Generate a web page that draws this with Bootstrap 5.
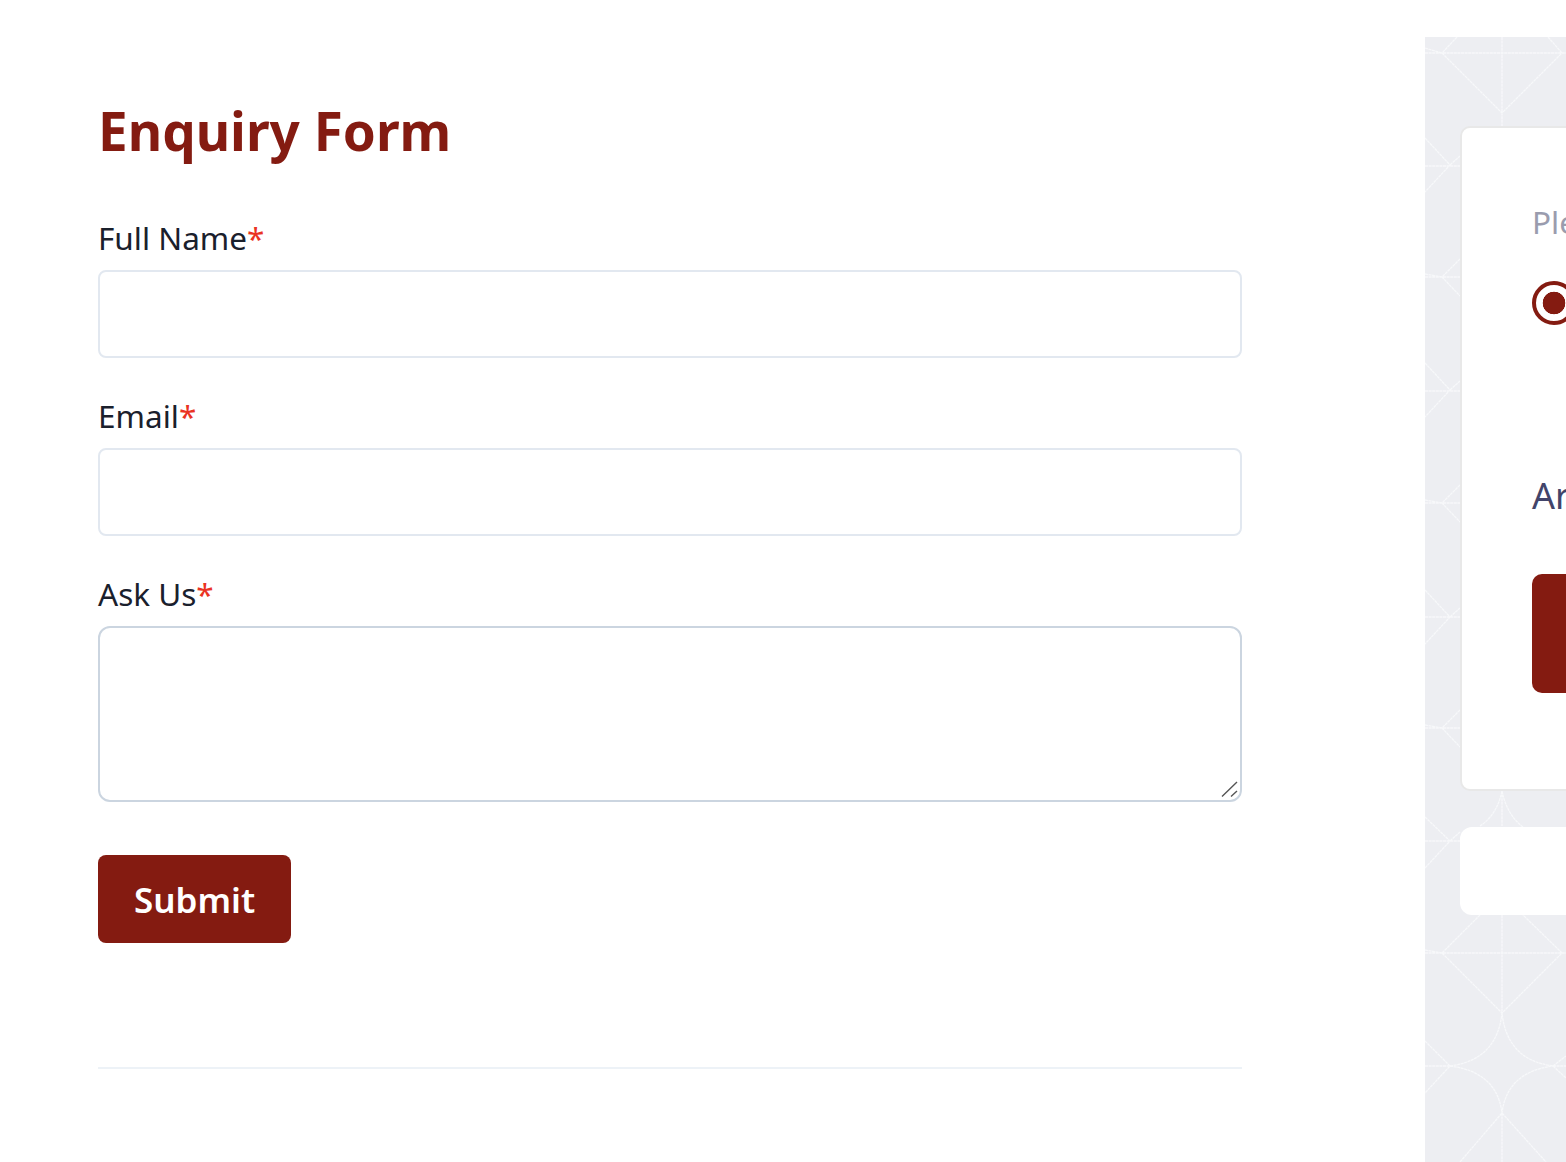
<!DOCTYPE html>
<html lang="en">
<head>
<meta charset="utf-8">
<title>Enquiry Form</title>
<link href="https://cdn.jsdelivr.net/npm/bootstrap@5.3.0/dist/css/bootstrap.min.css" rel="stylesheet">
<style>
html,body{height:1162px;overflow:hidden;background:#fff;font-family:"Noto Sans","Open Sans",sans-serif}
.shell{height:1162px;overflow:hidden}
.form-col{width:1242px;flex:none;padding-left:98px;padding-top:97px}
.form-title{font-size:53px;line-height:68px;font-weight:700;color:#841b11;margin:0 0 53px}
.form-field{margin-bottom:38px}
.field-label{font-size:31.5px;line-height:40px;color:#1a202c;margin-bottom:12px;display:block}
.field-label span{color:#ea3323}
.field-input{height:88px;border:2px solid #e2e8f0;border-radius:8px;box-shadow:none}
.area-wrap{position:relative}
.field-area{height:176px;border:2px solid #cbd5e0;border-radius:12px;box-shadow:none;resize:none}
.area-grip{position:absolute;right:3px;bottom:4px;width:18px;height:18px;stroke:#555;stroke-width:1.4;fill:none;pointer-events:none}
.send-btn{height:88px;width:193px;background:#841b11;border:0;border-radius:8px;color:#fff;font-size:35px;font-weight:600;padding:2px 0 0;margin-top:15px}
.send-btn:hover{background:#841b11;color:#fff}
.form-rule{margin:124px 0 0;border:0;border-top:2px solid #edf2f7;opacity:1}
.side-col{margin-left:183px;margin-top:37px;width:500px;flex:none;background:#edeef2;padding:89px 0 0 35px;position:relative;height:1125px}
.side-art{position:absolute;left:0;top:0;width:141px;height:1125px;fill:none;stroke:#f7f8fa;stroke-width:1.3;stroke-dasharray:3 .6}
.side-card{position:relative;background:#fff;border:2px solid #e8e8e8;border-radius:10px;height:665px;padding:74px 70px 0;white-space:nowrap}
.side-hint{font-size:31.5px;line-height:40px;color:#9a9cae;margin:0 0 39px}
.side-radio{appearance:none;display:block;width:44px;height:44px;border:4px solid #841b11;border-radius:50%;background:radial-gradient(circle,#841b11 0 11px,#fff 11.6px);margin:0 0 147px}
.side-q{font-size:36px;line-height:48px;color:#42446a;margin:0 0 54px}
.side-btn{height:119px;width:380px;background:#841b11;border:0;border-radius:10px;display:block}
.side-blank{position:relative;background:#fff;border-radius:12px;height:88px;margin-top:36px}
</style>
</head>
<body>
<div class="shell d-flex align-items-start">
  <main class="form-col">
    <h1 class="form-title">Enquiry Form</h1>
    <form>
      <div class="form-field"><label class="field-label">Full Name<span>*</span></label><input class="form-control field-input" type="text"></div>
      <div class="form-field"><label class="field-label">Email<span>*</span></label><input class="form-control field-input" type="email"></div>
      <div class="form-field"><label class="field-label">Ask Us<span>*</span></label><div class="area-wrap"><textarea class="form-control field-area"></textarea><svg class="area-grip" viewBox="0 0 18 18" aria-hidden="true"><path d="M1 16.5L16 2M10 16.5L16 11"/></svg></div></div>
      <button type="button" class="btn send-btn">Submit</button>
    </form>
    <hr class="form-rule">
  </main>
  <aside class="side-col">
    <svg class="side-art" viewBox="1425 37 141 1125" aria-hidden="true">
      <path d="M1425 53H1566M1502 37V126M1442 53L1502 113L1562 53M1548 37L1562 53M1457 37L1442 53M1425 48L1442 53"/>
      <path d="M1425 138L1450 165L1425 192M1425 166H1460M1450 165L1460 156"/>
      <path d="M1460 259L1442 277L1460 296M1425 277H1460M1425 274L1442 277"/>
      <path d="M1425 363L1450 390L1425 417M1425 391H1460M1450 390L1460 381"/>
      <path d="M1460 485L1442 503L1460 522M1425 503H1460M1425 500L1442 503"/>
      <path d="M1425 590L1450 617L1425 644M1425 617H1460M1450 617L1460 608"/>
      <path d="M1460 710L1442 728L1460 747M1425 728H1460M1425 725L1442 728"/>
      <path d="M1425 817L1450 841L1425 868M1425 841H1460M1450 841L1460 832"/>
      <path d="M1502 791V826M1502 791Q1497 815 1480 826M1502 791Q1507 815 1523 827"/>
      <path d="M1480 915L1442 953L1502 1013L1562 953L1523 915M1425 953H1566M1502 915V1013M1425 950L1442 953"/>
      <path d="M1450 1066Q1497 1060 1502 1013Q1507 1060 1553 1066M1425 1041L1450 1066L1425 1093M1425 1066H1450M1553 1066H1566M1553 1066L1566 1056M1553 1066L1566 1078"/>
      <path d="M1450 1066Q1497 1072 1502 1113Q1507 1072 1553 1066M1460 1162L1502 1113L1546 1162M1502 1113V1162"/>
    </svg>
    <section class="side-card">
      <p class="side-hint">Please select an option</p>
      <input class="side-radio" type="radio" checked aria-label="Option">
      <p class="side-q">Are you ready to continue?</p>
      <button type="button" class="side-btn"></button>
    </section>
    <div class="side-blank"></div>
  </aside>
</div>
<script src="https://cdn.jsdelivr.net/npm/bootstrap@5.3.0/dist/js/bootstrap.bundle.min.js"></script>
</body>
</html>
